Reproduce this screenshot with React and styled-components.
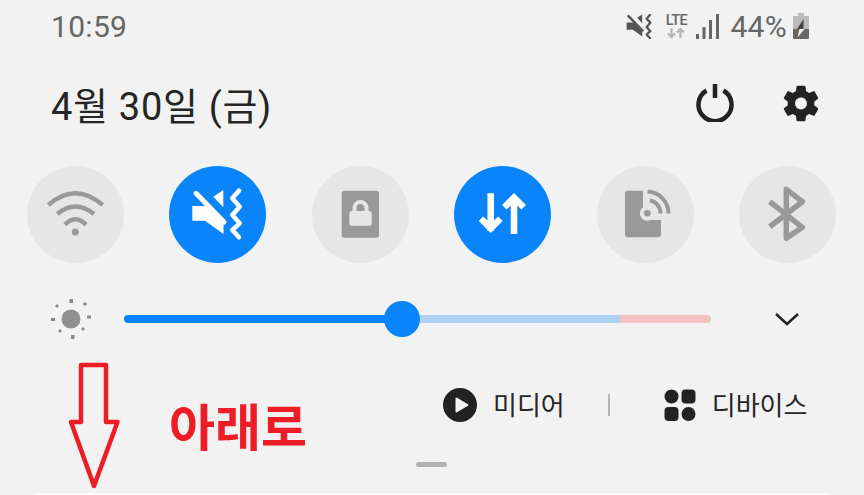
import React from "react";
import styled, { createGlobalStyle } from "styled-components";

const Global = createGlobalStyle`
  html, body { margin: 0; padding: 0; background: #f2f2f2; }
`;
const KR = `Roboto, "Noto Sans CJK KR", sans-serif`;

const Panel = styled.div`
  position: relative; width: 864px; height: 495px; overflow: hidden;
  background: #f2f2f2; font-family: ${KR}; box-sizing: border-box;
`;
const StatusBar = styled.div`
  height: 52px; padding: 0 55px 0 51px; display: flex; align-items: center; justify-content: space-between;
  color: #666; font-size: 30px;
`;
const Time = styled.span`letter-spacing: 0.3px;`;
const StatusIcons = styled.div`display: flex; align-items: center;`;
const Percent = styled.span`margin: 0 6px 0 11px; letter-spacing: 0.3px;`;
const LteWrap = styled.div`
  width: 26px; margin-left: 11px; margin-right: 7px; display: flex; flex-direction: column; align-items: center;
`;
const LteText = styled.span`font-size: 14.5px; font-weight: 500; line-height: 13px; letter-spacing: -0.6px; color: #666;`;

const DateRow = styled.div`
  height: 102px; padding: 0 45px 0 51px; display: flex; align-items: center; justify-content: space-between;
`;
const DateText = styled.span`font-size: 38px; color: #252525; letter-spacing: 0.7px;`;
const Actions = styled.div`display: flex; align-items: center; gap: 49px;`;

const QuickRow = styled.div`
  margin-top: 12px; padding: 0 28px 0 27px; display: flex; justify-content: space-between;
`;
const Round = styled.div`
  width: 97px; height: 97px; border-radius: 50%;
  background: ${p => (p.$on ? "#0a84fb" : "#e6e6e6")};
  display: flex;
`;
const SliderRow = styled.div`
  height: 112px; padding: 0 64px 0 50px; display: flex; align-items: center; box-sizing: border-box;
`;
const Track = styled.div`
  position: relative; margin: 0 63px 0 31px; flex: 1; height: 8px; border-radius: 4px; display: flex; overflow: visible;
`;
const Seg = styled.div`
  height: 100%; background: ${p => p.$c}; flex: ${p => p.$f} 0 0;
  border-radius: ${p => p.$r};
`;
const Thumb = styled.div`
  position: absolute; left: 260px; top: -14px; width: 36px; height: 36px; border-radius: 50%; background: #0a84fb;
`;
const MediaRow = styled.div`
  height: 60px; padding-left: 443px; display: flex; align-items: center; color: #262626;
`;
const Label = styled.span`font-size: 26px; margin-left: ${p => p.$m}px; line-height: 1; font-weight: 400; padding-top: 2px;`;
const Sep = styled.div`width: 2px; height: 22px; background: #b4b4b4; margin: 0 54px 0 43px;`;
const Handle = styled.div`
  margin: 27px 0 0 416px; width: 31px; height: 5px; border-radius: 3px; background: #b2b2b2;
`;
const NextCard = styled.div`
  margin: 26px 20px 0; height: 40px; border-radius: 30px; background: #fcfcfc;
`;
const Note = styled.span`
  position: absolute; left: 169px; top: 388px; font-size: 50px; font-weight: 700; line-height: 72px;
  color: #ee1c25; font-family: "Noto Sans CJK KR", sans-serif;
`;
const ArrowMark = styled.svg`position: absolute; left: 64px; top: 360px;`;

const Muted = ({ c, width = 97, height = 97, viewBox = "0 0 97 97" }) => (
  <svg width={width} height={height} viewBox={viewBox}>
    <path d="M23.300 40H37L54.500 58V68L36 54.700H23.300zM44.300 30.700 54.300 24V41.300z" fill={c} />
    <path d="M27 27.300 55 56" stroke={c} strokeWidth="5" strokeLinecap="round" />
    <path d="M70 24.700 63.300 32.300l7.400 8.400-7.400 8.300 7.400 8.300-7.400 6.700 6.700 7.300" fill="none" stroke={c} strokeWidth="4.500" strokeLinecap="round" strokeLinejoin="round" />
  </svg>
);

export default function App() {
  return (
    <Panel>
      <Global />
      <StatusBar>
        <Time>10:59</Time>
        <StatusIcons>
          <Muted c="#555" width={26} height={25} viewBox="22 23 52 50" />
          <LteWrap>
            <LteText>LTE</LteText>
            <svg width="20" height="12" viewBox="0 0 20 12">
              <path d="M5.500 1v9M2 6.500l3.500 3.500L9 6.500" stroke="#b4b4b4" strokeWidth="2.200" fill="none" />
              <path d="M14.500 11V2M11 5.500 14.500 2 18 5.500" stroke="#b4b4b4" strokeWidth="2.200" fill="none" />
            </svg>
          </LteWrap>
          <svg width="23" height="25" viewBox="0 0 23 25">
            <path d="M0 20v5h3v-5zM6.500 13v12h3V13zM13 6v19h3V6zM20 0v25h3V0z" fill="#666" />
          </svg>
          <Percent>44%</Percent>
          <svg width="16" height="26" viewBox="0 0 16 26">
            <path d="M5 0h6v3h5v13H0V3h5z" fill="#bcbcbc" />
            <path d="M0 16h16v8.500a1.500 1.500 0 0 1-1.500 1.500h-13A1.500 1.500 0 0 1 0 24.500z" fill="#666" />
            <path d="M10.500 6 4 16h6.500z" fill="#444" />
            <path d="M6.500 16 4.500 24.500 11.500 16z" fill="#f2f2f2" />
          </svg>
        </StatusIcons>
      </StatusBar>

      <DateRow>
        <DateText>4월 30일 (금)</DateText>
        <Actions>
          <svg width="38" height="38" viewBox="0 0 38 38">
            <path d="M10.500 6.500a16.500 16.500 0 1 0 17 0" fill="none" stroke="#222" strokeWidth="4.500" />
            <path d="M19 0v14" stroke="#222" strokeWidth="4.500" />
          </svg>
          <svg width="36" height="37" viewBox="2.600 2 18.800 20">
            <path fill="#222" d="M19.140 12.940c.04-.3.06-.61.06-.94 0-.32-.02-.64-.07-.94l2.030-1.580c.18-.14.23-.41.12-.61l-1.920-3.320c-.12-.22-.37-.29-.59-.22l-2.390.96c-.5-.38-1.030-.7-1.620-.94l-.36-2.540c-.04-.24-.24-.41-.48-.41h-3.840c-.24 0-.43.17-.47.41l-.36 2.540c-.59.24-1.130.57-1.620.94l-2.390-.96c-.22-.08-.47 0-.59.22L2.740 8.870c-.12.21-.08.47.12.61l2.030 1.580c-.05.3-.09.63-.09.94s.02.64.07.94l-2.030 1.580c-.18.14-.23.41-.12.61l1.920 3.320c.12.22.37.29.59.22l2.390-.96c.5.38 1.030.7 1.620.94l.36 2.540c.05.24.24.41.48.41h3.840c.24 0 .44-.17.47-.41l.36-2.540c.59-.24 1.130-.56 1.620-.94l2.390.96c.22.08.47 0 .59-.22l1.920-3.320c.12-.22.07-.47-.12-.61l-2.010-1.580zM12 15.200c-1.780 0-3.200-1.420-3.200-3.200s1.420-3.200 3.200-3.200 3.200 1.420 3.200 3.200-1.420 3.200-3.200 3.200z" />
          </svg>
        </Actions>
      </DateRow>

      <QuickRow>
        <Round>
          <svg width="97" height="97" viewBox="0 0 97 97" fill="none" stroke="#999" strokeWidth="4.500">
            <path d="M21.300 39Q48.300 15.500 75.700 39M30.300 48Q48.300 33 67 48M38 58.700Q48.300 48 59 58.700" />
            <circle cx="48.300" cy="66" r="3.500" fill="#999" stroke="none" />
          </svg>
        </Round>
        <Round $on><Muted c="#fff" /></Round>
        <Round>
          <svg width="97" height="97" viewBox="0 0 97 97">
            <rect x="29.700" y="24.700" width="37.300" height="47" rx="2.500" fill="#999" />
            <rect x="37.300" y="45" width="22.400" height="14.700" rx="2.500" fill="#e6e6e6" />
            <path d="M42.500 46v-4a6 6 0 0 1 12 0v4" fill="none" stroke="#e6e6e6" strokeWidth="4" />
          </svg>
        </Round>
        <Round $on>
          <svg width="97" height="97" viewBox="0 0 97 97" fill="none" stroke="#fff" strokeWidth="6.500">
            <path d="M36.700 27.300V65M27 52.700l9.700 9.700 9.700-9.700" />
            <path d="M60 68V31M50.300 41.300 60 31.600l9.700 9.700" />
          </svg>
        </Round>
        <Round>
          <svg width="97" height="97" viewBox="0 0 97 97">
            <path d="M31 24.700H46V47H50V54H64V68.300a3 3 0 0 1-3 3H31a3 3 0 0 1-3-3V27.700a3 3 0 0 1 3-3z" fill="#999" />
            <circle cx="50.300" cy="47.300" r="7.500" fill="#e6e6e6" />
            <circle cx="50.300" cy="47.300" r="3.300" fill="#999" />
            <path d="M53 34.500A13 13 0 0 1 63.500 47.500M50.500 25.500A22 22 0 0 1 71.500 47.500" fill="none" stroke="#999" strokeWidth="4" />
          </svg>
        </Round>
        <Round>
          <svg width="97" height="97" viewBox="0 0 97 97">
            <path d="M30.700 35.700 63.300 61.300 47.300 72.300V23.300L63.300 35.700 30.700 60.700" fill="none" stroke="#999" strokeWidth="5.500" strokeLinejoin="round" />
          </svg>
        </Round>
      </QuickRow>

      <SliderRow>
        <svg width="43" height="43" viewBox="0 0 43 43">
          <circle cx="21" cy="21" r="9.500" fill="#8f8f8f" />
          <path d="M19.500 1h3.500v4h-3.500zM21 37h3.500v4H21zM1 20h4v3H1zM37 17.500h4v3h-4z" fill="#888" />
          <path d="M7 6l2 2-2 2-2-2zM35 4l2 2-2 2-2-2zM10 31l2 2-2 2-2-2zM33 29l2 2-2 2-2-2z" fill="#888" />
        </svg>
        <Track>
          <Seg $c="#0a84fb" $f={278} $r="4px 0 0 4px" />
          <Seg $c="#aed0f2" $f={218} $r="0" />
          <Seg $c="#f4c1c1" $f={91} $r="0 4px 4px 0" />
          <Thumb />
        </Track>
        <svg width="26" height="16" viewBox="0 0 26 16">
          <path d="M2 3l11 10L24 3" fill="none" stroke="#222" strokeWidth="2.500" />
        </svg>
      </SliderRow>

      <MediaRow>
        <svg width="34" height="34" viewBox="0 0 34 34">
          <circle cx="17" cy="17" r="17" fill="#222" />
          <path d="M12.500 10.500a1 1 0 0 1 1.500-.8l11 6.500a1 1 0 0 1 0 1.600l-11 6.500a1 1 0 0 1-1.500-.8z" fill="#f2f2f2" />
        </svg>
        <Label $m={16}>미디어</Label>
        <Sep />
        <svg width="32" height="32" viewBox="0 0 32 32" fill="#222">
          <circle cx="7.500" cy="7.500" r="7" />
          <rect x="17.500" y="0.500" width="14" height="14" rx="4" />
          <rect x="0.500" y="18" width="14" height="14" rx="4" />
          <circle cx="24.500" cy="25" r="7" />
        </svg>
        <Label $m={16}>디바이스</Label>
      </MediaRow>
      <Handle />
      <NextCard />

      <ArrowMark width="60" height="132" viewBox="0 0 60 132">
        <path d="M17 5H42V62H53.500L30 126 7 62H17z" fill="none" stroke="#ee1c25" strokeWidth="4.500" strokeLinejoin="round" />
      </ArrowMark>
      <Note>아래로</Note>
    </Panel>
  );
}
